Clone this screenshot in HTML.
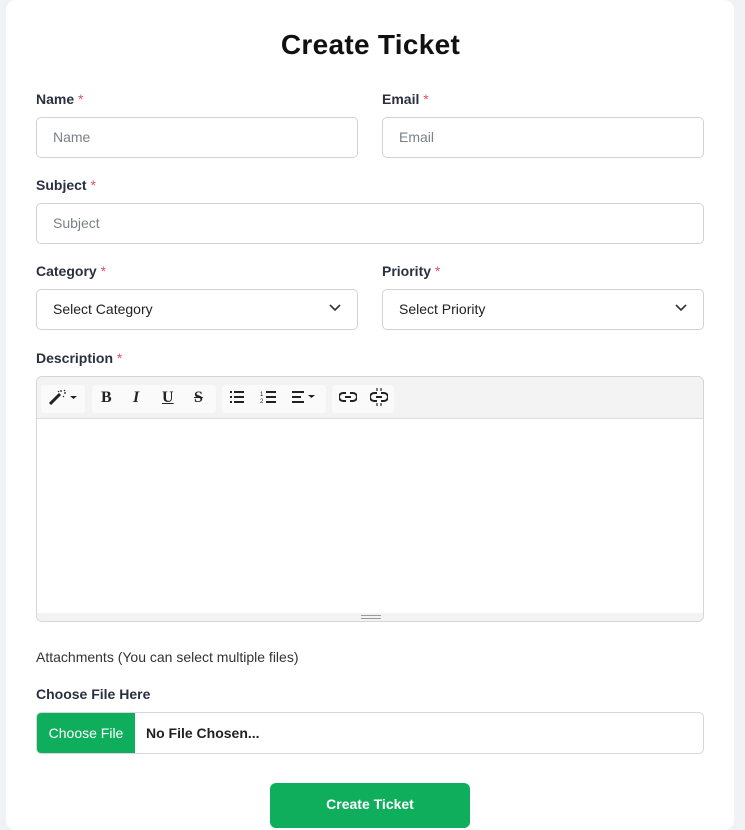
<!DOCTYPE html>
<html><head><style>
*{box-sizing:border-box;margin:0;padding:0}
body{width:745px;height:815px;background:#f1f2f6;font-family:"Liberation Sans",sans-serif;position:relative;overflow:hidden}
.card{position:absolute;left:6px;top:0;width:728px;height:830px;background:#fff;border-radius:10px}
.a{position:absolute}
h1{position:absolute;left:0;width:741px;top:29px;text-align:center;font-size:28px;font-weight:600;color:#111;letter-spacing:.3px}
.lbl{position:absolute;font-size:14px;font-weight:bold;color:#2b3040}
.lbl span{color:#e2506c;font-weight:normal}
.in{position:absolute;height:41px;border:1px solid #cfd3d9;border-radius:5px;font-size:14px;color:#7b8088;padding:0 16px;line-height:39px;background:#fff}
.sel{color:#222}
.chev{position:absolute;right:16px;top:14px}
.tb{position:absolute;top:8px;height:28px;background:#fafafa;border-radius:3px}
.ic{position:absolute;top:0;height:28px;font-family:"Liberation Serif",serif;font-weight:bold;font-size:16px;color:#222;line-height:28px}
</style></head><body>
<div class="card"></div>
<h1>Create Ticket</h1>
<div class="lbl" style="left:36px;top:91px">Name <span>*</span></div>
<div class="lbl" style="left:382px;top:91px">Email <span>*</span></div>
<div class="in" style="left:36px;top:117px;width:322px">Name</div>
<div class="in" style="left:382px;top:117px;width:322px">Email</div>
<div class="lbl" style="left:36px;top:177px">Subject <span>*</span></div>
<div class="in" style="left:36px;top:203px;width:668px">Subject</div>
<div class="lbl" style="left:36px;top:263px">Category <span>*</span></div>
<div class="lbl" style="left:382px;top:263px">Priority <span>*</span></div>
<div class="in sel" style="left:36px;top:289px;width:322px">Select Category<svg class="chev" width="12" height="8" viewBox="0 0 12 8"><path d="M1 1l5 5 5-5" fill="none" stroke="#333" stroke-width="1.6"/></svg></div>
<div class="in sel" style="left:382px;top:289px;width:322px">Select Priority<svg class="chev" width="12" height="8" viewBox="0 0 12 8"><path d="M1 1l5 5 5-5" fill="none" stroke="#333" stroke-width="1.6"/></svg></div>
<div class="lbl" style="left:36px;top:350px">Description <span>*</span></div>
<div class="a" style="left:36px;top:376px;width:668px;height:246px;border:1px solid #d6d6d6;border-radius:6px;overflow:hidden;background:#fff">
 <div class="a" style="left:0;top:0;width:668px;height:42px;background:#f3f3f3;border-bottom:1px solid #dcdcdc">
  <div class="tb" style="left:4px;width:44px"></div>
  <div class="tb" style="left:55px;width:124px"></div>
  <div class="tb" style="left:185px;width:104px"></div>
  <div class="tb" style="left:295px;width:62px"></div>
  <svg class="a" style="left:12px;top:12px" width="30" height="16" viewBox="0 0 30 16"><path d="M1 15L11 5" stroke="#222" stroke-width="3"/><path d="M12 1v2M15 4h2M9 2l1 1M14 7l1 1M16 1l-1 1" stroke="#222" stroke-width="1.2"/><path d="M21 7h7l-3.5 3z" fill="#222"/></svg>
  <div class="ic" style="left:64px;top:7px">B</div>
  <div class="ic" style="left:96px;top:7px;font-style:italic">I</div>
  <div class="ic" style="left:125px;top:7px;text-decoration:underline">U</div>
  <div class="ic" style="left:157px;top:7px;text-decoration:line-through">S</div>
  <svg class="a" style="left:192px;top:14px" width="16" height="12" viewBox="0 0 16 12"><path d="M1 1h2M5 1h10M1 6h2M5 6h10M1 11h2M5 11h10" stroke="#222" stroke-width="2"/></svg>
  <svg class="a" style="left:223px;top:13px" width="16" height="14" viewBox="0 0 16 14"><path d="M6 2h10M6 7h10M6 12h10" stroke="#222" stroke-width="2"/><text x="0" y="6" font-size="6" fill="#222">1</text><text x="0" y="13" font-size="6" fill="#222">2</text></svg>
  <svg class="a" style="left:254px;top:14px" width="26" height="12" viewBox="0 0 26 12"><path d="M1 1h12M1 6h9M1 11h12" stroke="#222" stroke-width="2"/><path d="M17 4h7l-3.5 3z" fill="#222"/></svg>
  <svg class="a" style="left:302px;top:14px" width="18" height="12" viewBox="0 0 18 12"><path d="M7 2H4a4 4 0 000 8h3M11 2h3a4 4 0 010 8h-3M6 6h6" fill="none" stroke="#222" stroke-width="2"/></svg>
  <svg class="a" style="left:333px;top:11px" width="18" height="18" viewBox="0 0 18 18"><path d="M7 5H4a4 4 0 000 8h3M11 5h3a4 4 0 010 8h-3M6 9h6" fill="none" stroke="#222" stroke-width="2"/><path d="M7 0v3M11 0v3M7 15v3M11 15v3" stroke="#222" stroke-width="1.2"/></svg>
 </div>
 <div class="a" style="left:0;top:236px;width:668px;height:10px;background:#f3f3f3"></div>
 <div class="a" style="left:324px;top:238px;width:20px;height:4px;border-top:1px solid #999;border-bottom:1px solid #999"></div>
</div>
<div class="a" style="left:36px;top:649px;font-size:14px;color:#333">Attachments (You can select multiple files)</div>
<div class="lbl" style="left:36px;top:686px;font-weight:600">Choose File Here</div>
<div class="a" style="left:36px;top:712px;width:668px;height:42px;border:1px solid #d6d8dc;border-radius:5px;overflow:hidden;background:#fff">
 <div class="a" style="left:0;top:0;width:98px;height:40px;background:#0fae5c;color:#fff;font-size:14px;line-height:40px;text-align:center">Choose File</div>
 <div class="a" style="left:109px;top:0;font-size:14px;line-height:40px;color:#222;font-weight:600">No File Chosen...</div>
</div>
<div class="a" style="left:270px;top:783px;width:200px;height:45px;background:#0fae5c;border-radius:6px;color:#fff;font-size:14px;text-align:center;padding-top:13px;font-weight:600">Create Ticket</div>
</body></html>
